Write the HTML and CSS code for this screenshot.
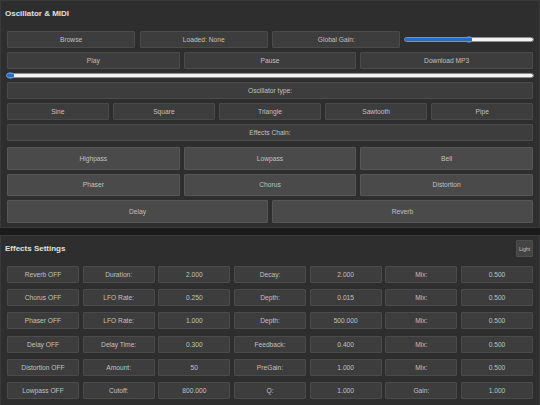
FILE: index.html
```html
<!DOCTYPE html>
<html lang="en">
<head>
<meta charset="utf-8">
<title>Oscillator &amp; MIDI</title>
<link rel="stylesheet" href="styles.css">
</head>
<body>
<section class="panel panel-osc">
  <header class="panel-head"><h2 class="panel-title">Oscillator &amp; MIDI</h2></header>
  <div class="stack">
    <div class="row cols-4">
      <button class="btn">Browse</button>
      <div class="btn">Loaded: None</div>
      <div class="btn">Global Gain:</div>
      <div class="slider-cell"><input class="slider" type="range" min="0" max="100" value="50" style="--fill:50%"></div>
    </div>
    <div class="row cols-3">
      <button class="btn">Play</button>
      <button class="btn">Pause</button>
      <button class="btn">Download MP3</button>
    </div>
    <div class="seek"><input class="slider" type="range" min="0" max="100" value="0" style="--fill:0%"></div>
    <div class="btn label-row">Oscillator type:</div>
    <div class="row cols-5">
      <button class="btn">Sine</button>
      <button class="btn">Square</button>
      <button class="btn">Triangle</button>
      <button class="btn">Sawtooth</button>
      <button class="btn">Pipe</button>
    </div>
    <div class="btn label-row">Effects Chain:</div>
    <div class="fx">
      <div class="row cols-3">
        <button class="btn btn-fx">Highpass</button>
        <button class="btn btn-fx">Lowpass</button>
        <button class="btn btn-fx">Bell</button>
      </div>
      <div class="row cols-3">
        <button class="btn btn-fx">Phaser</button>
        <button class="btn btn-fx">Chorus</button>
        <button class="btn btn-fx">Distortion</button>
      </div>
      <div class="row cols-2">
        <button class="btn btn-fx">Delay</button>
        <button class="btn btn-fx">Reverb</button>
      </div>
    </div>
  </div>
</section>

<section class="panel panel-fx">
  <header class="panel-head">
    <h2 class="panel-title">Effects Settings</h2>
    <button class="btn btn-theme">Light</button>
  </header>
  <div class="settings">
    <button class="btn">Reverb OFF</button><div class="btn">Duration:</div><div class="btn">2.000</div><div class="btn">Decay:</div><div class="btn">2.000</div><div class="btn">Mix:</div><div class="btn">0.500</div>
    <button class="btn">Chorus OFF</button><div class="btn">LFO Rate:</div><div class="btn">0.250</div><div class="btn">Depth:</div><div class="btn">0.015</div><div class="btn">Mix:</div><div class="btn">0.500</div>
    <button class="btn">Phaser OFF</button><div class="btn">LFO Rate:</div><div class="btn">1.000</div><div class="btn">Depth:</div><div class="btn">500.000</div><div class="btn">Mix:</div><div class="btn">0.500</div>
    <button class="btn">Delay OFF</button><div class="btn">Delay Time:</div><div class="btn">0.300</div><div class="btn">Feedback:</div><div class="btn">0.400</div><div class="btn">Mix:</div><div class="btn">0.500</div>
    <button class="btn">Distortion OFF</button><div class="btn">Amount:</div><div class="btn">50</div><div class="btn">PreGain:</div><div class="btn">1.000</div><div class="btn">Mix:</div><div class="btn">0.500</div>
    <button class="btn">Lowpass OFF</button><div class="btn">Cutoff:</div><div class="btn">800.000</div><div class="btn">Q:</div><div class="btn">1.000</div><div class="btn">Gain:</div><div class="btn">1.000</div>
  </div>
</section>
</body>
</html>
```

FILE: styles.css
```css
* { box-sizing: border-box; }

html, body {
  margin: 0;
  padding: 0;
  background: #1b1b1b;
  font-family: "Liberation Sans", Arial, sans-serif;
  color: #c0c0c0;
}

.panel {
  background: #2e2e2e;
  border: 1px solid #3a3a3a;
  padding: 0 6px 6px;
}

.panel-osc { height: 228px; }

.panel-fx {
  margin-top: 7px;
  height: 172px;
}

.panel-head {
  display: flex;
  align-items: center;
  justify-content: space-between;
  min-height: 17px;
  margin: 4px 0 9px -2px;
}

.panel-title {
  margin: 0;
  font-size: 8px;
  font-weight: bold;
  color: #e0e0e0;
}

.stack {
  display: flex;
  flex-direction: column;
  gap: 4px;
}

.row {
  display: grid;
  gap: 4px;
}

.cols-2 { grid-template-columns: repeat(2, 1fr); }
.cols-3 { grid-template-columns: repeat(3, 1fr); }
.cols-4 { grid-template-columns: repeat(4, 1fr); column-gap: 4.4px; }
.cols-5 { grid-template-columns: repeat(5, 1fr); column-gap: 4.5px; }

.btn {
  display: flex;
  align-items: center;
  justify-content: center;
  height: 17px;
  margin: 0;
  padding: 0;
  background: #3d3d3d;
  border: 1px solid #4b4b4b;
  border-radius: 1px;
  font-family: inherit;
  font-size: 6.67px;
  color: #c0c0c0;
  white-space: nowrap;
}

.label-row { width: 100%; }

.fx {
  display: flex;
  flex-direction: column;
  gap: 4px;
  margin-top: 2px;
}

.btn-fx {
  height: 22.5px;
  background: #4a4a4a;
  border-color: #575757;
}

.btn-theme {
  width: 17px;
  height: 17px;
  font-size: 5.2px;
  background: #444444;
  border-color: #4e4e4e;
}

.slider-cell {
  display: flex;
  align-items: center;
}

.seek {
  height: 5px;
  display: flex;
  align-items: center;
}

.slider {
  -webkit-appearance: none;
  appearance: none;
  width: 100%;
  height: 3px;
  margin: 0;
  border-radius: 2px;
  outline: 0.5px solid #8f8f8f;
  background: linear-gradient(to right, #1b6fdc var(--fill), #f3f3f3 var(--fill));
}

.slider::-webkit-slider-runnable-track {
  height: 3px;
  background: transparent;
}

.slider::-webkit-slider-thumb {
  -webkit-appearance: none;
  appearance: none;
  width: 6.5px;
  height: 6.5px;
  margin-top: -1.75px;
  border: none;
  border-radius: 50%;
  background: #1b6fdc;
}

.settings {
  display: grid;
  grid-template-columns: repeat(7, 1fr);
  column-gap: 3.7px;
  row-gap: 6.2px;
}
```
